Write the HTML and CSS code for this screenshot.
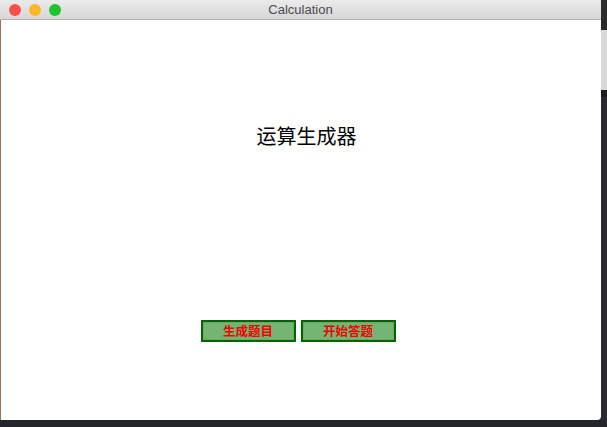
FILE: index.html
```html
<!DOCTYPE html>
<html>
<head>
<meta charset="utf-8">
<link rel="stylesheet" href="styles.css">
</head>
<body>
<div class="screen">
  <div class="top">
    <div class="window">
      <div class="titlebar">
        <div class="lights">
          <span class="light red"></span>
          <span class="light yellow"></span>
          <span class="light green"></span>
        </div>
        <div class="title">Calculation</div>
      </div>
      <div class="content">
        <h1 class="heading">运算生成器</h1>
        <div class="buttons">
          <button class="btn">生成题目</button>
          <button class="btn">开始答题</button>
        </div>
      </div>
    </div>
    <div class="side">
      <div class="side-a"></div>
      <div class="side-b"></div>
      <div class="side-c"></div>
      <div class="side-d"></div>
    </div>
  </div>
  <div class="bottom"></div>
</div>
</body>
</html>
```
FILE: styles.css
```css
html, body {
  margin: 0;
  padding: 0;
  width: 607px;
  height: 427px;
  overflow: hidden;
  background: #22262b;
}
.screen {
  display: flex;
  flex-direction: column;
  width: 607px;
  height: 427px;
}
.top {
  display: flex;
  height: 420px;
  background: #272b30;
}
.window {
  width: 601px;
  display: flex;
  flex-direction: column;
  background: #ffffff;
  border-radius: 0 0 4px 0;
  overflow: hidden;
}
.titlebar {
  height: 19px;
  border-bottom: 1px solid #b4b4b4;
  background: linear-gradient(#ebebeb, #d6d6d6);
  display: flex;
  align-items: center;
  position: relative;
}
.lights {
  display: flex;
  gap: 8px;
  padding-left: 9px;
}
.light {
  width: 12px;
  height: 12px;
  border-radius: 50%;
  display: block;
}
.red { background: #fc4f4b; }
.yellow { background: #fdb726; }
.green { background: #1fc32e; }
.title {
  position: absolute;
  left: 0;
  right: 0;
  top: 0;
  height: 19px;
  line-height: 19px;
  text-align: center;
  font-family: "Liberation Sans", Arial, sans-serif;
  font-size: 13px;
  color: #4c4c4c;
}
.content {
  flex: 1;
  border-left: 1px solid #9a7446;
  display: flex;
  flex-direction: column;
  align-items: center;
}
.heading {
  margin: 104px 0 0 11px;
  font-family: "Noto Sans CJK SC", sans-serif;
  font-weight: normal;
  font-size: 20px;
  line-height: 24px;
  color: #000000;
}
.buttons {
  display: flex;
  gap: 5px;
  margin-top: 172px;
  margin-right: 6px;
}
.btn {
  width: 95px;
  height: 22px;
  padding: 0;
  box-sizing: border-box;
  border: 2px solid #006400;
  background: #74b574;
  box-shadow: inset 0 0 0 1px #6aa96a;
  border-radius: 0;
  color: #f00000;
  font-family: "Noto Sans CJK SC", sans-serif;
  font-size: 12.5px;
  font-weight: bold;
  line-height: 18px;
}
.side {
  width: 6px;
  display: flex;
  flex-direction: column;
}
.side-a { height: 30px; background: #2a2a2a; }
.side-b { height: 60px; background: #d9d9d9; }
.side-c { height: 7px; background: #1b1e21; }
.side-d { flex: 1; background: #272b30; }
.bottom {
  height: 7px;
  background: #22262b;
}
```
